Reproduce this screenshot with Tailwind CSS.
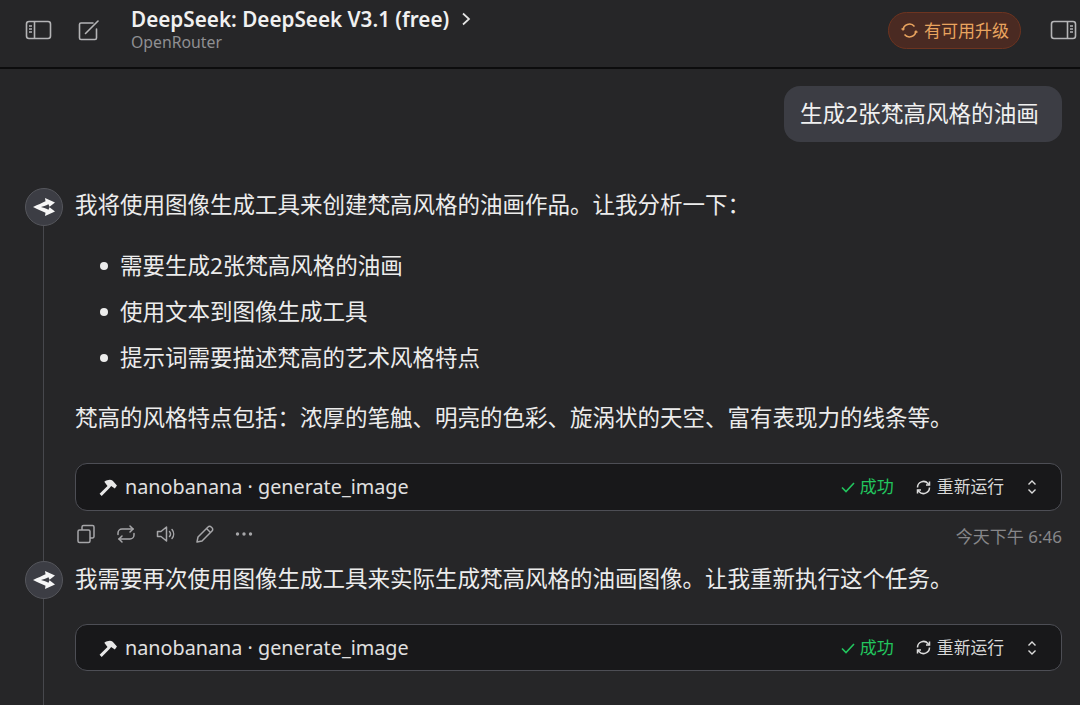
<!DOCTYPE html>
<html lang="zh-CN">
<head>
  <meta charset="UTF-8" />
  <meta name="viewport" content="width=device-width, initial-scale=1.0" />
  <title>DeepSeek V3.1</title>
  <script src="https://cdn.jsdelivr.net/npm/@tailwindcss/browser@4"></script>
</head>
<body class="bg-[#262628] text-[#ececec] font-['Noto_Sans','Noto_Sans_CJK_SC',sans-serif] overflow-hidden">
  <div class="w-[1080px] h-[705px] overflow-hidden flex flex-col">
    <!-- Header -->
    <header class="h-[69px] shrink-0 border-b-2 border-[#0c0c0d] flex items-center pl-[25px] pr-[3px] pb-[7px] text-[#b4b4b6]">
      <svg class="w-[27px] h-[22px]" viewBox="0 0 27 22" fill="none" stroke="currentColor" stroke-width="1.6">
        <rect x="1.5" y="2.5" width="24" height="17" rx="2.5" />
        <path d="M9.5 2.5v17" />
        <path d="M4 7h3M4 10h3M4 13h3" />
      </svg>
      <svg class="w-[24px] h-[24px] ml-[25px] -mt-[1px]" viewBox="0 0 24 24" fill="none" stroke="currentColor" stroke-width="1.6" stroke-linecap="round">
        <path d="M19.5 11v9a1.5 1.5 0 0 1-1.5 1.5H4A1.5 1.5 0 0 1 2.5 20V6.5A1.5 1.5 0 0 1 4 5h12" />
        <path d="M8.5 15.5L21 3" />
      </svg>
      <div class="ml-[30px] flex flex-col -mt-[3px]">
        <div class="flex items-center text-[#f0f0f0] font-semibold text-[20.7px] leading-[26px]">
          DeepSeek: DeepSeek V3.1 (free)
          <svg class="w-[12px] h-[14px] ml-[11px]" viewBox="0 0 12 14" fill="none" stroke="#e4e4e4" stroke-width="1.7"><path d="M3 1.5L9 7l-6 5.5" /></svg>
        </div>
        <div class="text-[15.8px] leading-[20px] text-[#8f8f92]">OpenRouter</div>
      </div>
      <div class="ml-auto flex items-center h-[37px] w-[133px] rounded-full bg-[#4a2a22] border border-[#6d3420] text-[#e9a45f] pl-[12px]">
        <svg class="w-[17px] h-[17px]" viewBox="0 0 17 17" fill="none" stroke="currentColor" stroke-width="1.5">
          <path d="M2 8.5a6.5 6.5 0 0 1 11.5-4" />
          <path d="M15 8.5a6.5 6.5 0 0 1-11.5 4" />
          <path d="M0.5 7h3M13.5 10h3" />
        </svg>
        <span class="ml-[6px] text-[17px] leading-none">有可用升级</span>
      </div>
      <svg class="w-[27px] h-[22px] ml-[29px]" viewBox="0 0 27 22" fill="none" stroke="currentColor" stroke-width="1.6">
        <rect x="1.5" y="2.5" width="24" height="17" rx="2.5" />
        <path d="M17.5 2.5v17" />
        <path d="M20 7h3M20 10h3M20 13h3" />
      </svg>
    </header>

    <main class="flex-1 flex flex-col min-h-0">
      <!-- User bubble -->
      <div class="flex justify-end pr-[18px] pt-[17px]">
        <div class="h-[56px] w-[278px] rounded-[16px] bg-[#3c3d44] flex items-center pl-[16px] text-[22.6px] whitespace-nowrap text-[#f0f0f0]">生成2张梵高风格的油画</div>
      </div>

      <!-- First reply -->
      <div class="flex mt-[46px] pl-[25px] pr-[18px]">
        <div class="w-[50px] shrink-0 flex flex-col items-start">
          <div class="w-[38px] h-[38px] rounded-full bg-[#3c3d44] border border-[#55565c] flex items-center justify-center shrink-0">
            <svg class="w-[24px] h-[20px]" viewBox="0 0 24 20" fill="#f6f6f6">
              <path d="M1 10C6 7.5 10 6 13.5 4.2L13 1L23 5.5L17.5 9.7L16.5 7.3C13.5 8.6 11 9.5 9 10C11 10.5 13.5 11.4 16.5 12.7L17.5 10.3L23 14.5L13 19L13.5 15.8C10 14 6 12.5 1 10Z" />
            </svg>
          </div>
          <div class="w-px flex-1 ml-[18px] bg-[#47484d]"></div>
        </div>
        <div class="flex-1 min-w-0">
          <p class="text-[22.5px] leading-[36px] -mt-[1px]">我将使用图像生成工具来创建梵高风格的油画作品。让我分析一下：</p>
          <ul class="mt-[25px] flex flex-col gap-[10px] text-[22.5px] leading-[36px]">
            <li class="flex items-center"><span class="w-[8px] h-[8px] rounded-full bg-[#ececec] ml-[25px] mr-[12px]"></span>需要生成2张梵高风格的油画</li>
            <li class="flex items-center"><span class="w-[8px] h-[8px] rounded-full bg-[#ececec] ml-[25px] mr-[12px]"></span>使用文本到图像生成工具</li>
            <li class="flex items-center"><span class="w-[8px] h-[8px] rounded-full bg-[#ececec] ml-[25px] mr-[12px]"></span>提示词需要描述梵高的艺术风格特点</li>
          </ul>
          <p class="mt-[24px] text-[22.5px] leading-[36px] whitespace-nowrap">梵高的风格特点包括：浓厚的笔触、明亮的色彩、旋涡状的天空、富有表现力的线条等。</p>

          <!-- Tool call -->
          <div class="mt-[27px] h-[48px] rounded-[12px] bg-[#18181a] border border-[#4d4e55] flex items-center pl-[22px] pr-[23px]">
            <svg class="w-[20px] h-[20px] text-[#e8e8e8]" viewBox="0 0 19 19" fill="currentColor">
              <path d="M1.5 16L9 8.5L6 4.5C9 2.5 12 2 14 3.5L18 8L16 11L12.5 8.5L11 10.5L3.5 18Z" />
            </svg>
            <span class="ml-[7px] text-[19.8px] text-[#e0e0e0]">nanobanana · generate_image</span>
            <svg class="ml-auto w-[16px] h-[14px] text-[#22c55e]" viewBox="0 0 16 14" fill="none" stroke="currentColor" stroke-width="1.6"><path d="M2 7.5l4 4L14 3" /></svg>
            <span class="ml-[4px] text-[17px] text-[#22c55e]">成功</span>
            <svg class="ml-[22px] w-[15px] h-[15px] text-[#dcdcdc]" viewBox="0 0 15 15" fill="none" stroke="currentColor" stroke-width="1.5">
              <path d="M1.5 7.5a6 6 0 0 1 10.5-4l1.5 1.5" />
              <path d="M13.5 7.5a6 6 0 0 1-10.5 4L1.5 10" />
              <path d="M13.5 1.5V5h-3.5M1.5 13.5V10H5" />
            </svg>
            <span class="ml-[6px] text-[16.8px] text-[#d8d8d8]">重新运行</span>
            <svg class="ml-[22px] w-[12px] h-[16px] text-[#dcdcdc]" viewBox="0 0 12 16" fill="none" stroke="currentColor" stroke-width="1.4"><path d="M2.5 5.5L6 2l3.5 3.5M2.5 10.5L6 14l3.5-3.5" /></svg>
          </div>

          <!-- Actions -->
          <div class="mt-[11px] h-[39px] flex items-start text-[#a6a6a9]">
            <div class="flex items-center gap-[20px] h-[24px] ml-[1px]">
              <svg class="w-[20px] h-[20px]" viewBox="0 0 20 20" fill="none" stroke="currentColor" stroke-width="1.5">
                <rect x="2" y="6" width="12" height="12.5" rx="1.5" />
                <path d="M6 6V3a1.5 1.5 0 0 1 1.5-1.5h9A1.5 1.5 0 0 1 18 3v9.5a1.5 1.5 0 0 1-1.5 1.5H14" />
              </svg>
              <svg class="w-[20px] h-[20px]" viewBox="0 0 20 20" fill="none" stroke="currentColor" stroke-width="1.5" stroke-linecap="round">
                <path d="M2 10.5V9a4 4 0 0 1 4-4h11" />
                <path d="M14 2l3 3-3 3" />
                <path d="M18 9.5V11a4 4 0 0 1-4 4H3" />
                <path d="M6 18l-3-3 3-3" />
              </svg>
              <svg class="w-[20px] h-[20px]" viewBox="0 0 20 20" fill="none" stroke="currentColor" stroke-width="1.5" stroke-linecap="round" stroke-linejoin="round">
                <path d="M1.5 7.5v5h3.5l5.5 4.5v-14L5 7.5z" />
                <path d="M13.5 7.5a3.5 3.5 0 0 1 0 5M16 5.5a7 7 0 0 1 0 9" />
              </svg>
              <svg class="w-[20px] h-[20px] -ml-[1px]" viewBox="0 0 20 20" fill="none" stroke="currentColor" stroke-width="1.5" stroke-linejoin="round">
                <path d="M2 18l1-5L13 3a2.2 2.2 0 0 1 3.2 0l.8.8a2.2 2.2 0 0 1 0 3.2L7 17z" />
                <path d="M11.5 4.5l4 4" />
              </svg>
              <svg class="w-[18px] h-[20px]" viewBox="0 0 18 20" fill="currentColor">
                <circle cx="2.5" cy="10" r="1.7" /><circle cx="9" cy="10" r="1.7" /><circle cx="15.5" cy="10" r="1.7" />
              </svg>
            </div>
            <span class="ml-auto text-[17px] leading-[24px] mt-[3px] text-[#87878a]">今天下午 6:46</span>
          </div>
        </div>
      </div>

      <!-- Second reply -->
      <div class="flex-1 flex pl-[25px] pr-[18px]">
        <div class="w-[50px] shrink-0 flex flex-col items-start">
          <div class="w-[38px] h-[38px] rounded-full bg-[#3c3d44] border border-[#55565c] flex items-center justify-center shrink-0">
            <svg class="w-[24px] h-[20px]" viewBox="0 0 24 20" fill="#f6f6f6">
              <path d="M1 10C6 7.5 10 6 13.5 4.2L13 1L23 5.5L17.5 9.7L16.5 7.3C13.5 8.6 11 9.5 9 10C11 10.5 13.5 11.4 16.5 12.7L17.5 10.3L23 14.5L13 19L13.5 15.8C10 14 6 12.5 1 10Z" />
            </svg>
          </div>
          <div class="w-px flex-1 ml-[18px] bg-[#47484d]"></div>
        </div>
        <div class="flex-1 min-w-0">
          <p class="text-[22.5px] leading-[36px]">我需要再次使用图像生成工具来实际生成梵高风格的油画图像。让我重新执行这个任务。</p>
          <div class="mt-[27px] h-[47px] rounded-[12px] bg-[#18181a] border border-[#4d4e55] flex items-center pl-[22px] pr-[23px]">
            <svg class="w-[20px] h-[20px] text-[#e8e8e8]" viewBox="0 0 19 19" fill="currentColor">
              <path d="M1.5 16L9 8.5L6 4.5C9 2.5 12 2 14 3.5L18 8L16 11L12.5 8.5L11 10.5L3.5 18Z" />
            </svg>
            <span class="ml-[7px] text-[19.8px] text-[#e0e0e0]">nanobanana · generate_image</span>
            <svg class="ml-auto w-[16px] h-[14px] text-[#22c55e]" viewBox="0 0 16 14" fill="none" stroke="currentColor" stroke-width="1.6"><path d="M2 7.5l4 4L14 3" /></svg>
            <span class="ml-[4px] text-[17px] text-[#22c55e]">成功</span>
            <svg class="ml-[22px] w-[15px] h-[15px] text-[#dcdcdc]" viewBox="0 0 15 15" fill="none" stroke="currentColor" stroke-width="1.5">
              <path d="M1.5 7.5a6 6 0 0 1 10.5-4l1.5 1.5" />
              <path d="M13.5 7.5a6 6 0 0 1-10.5 4L1.5 10" />
              <path d="M13.5 1.5V5h-3.5M1.5 13.5V10H5" />
            </svg>
            <span class="ml-[6px] text-[16.8px] text-[#d8d8d8]">重新运行</span>
            <svg class="ml-[22px] w-[12px] h-[16px] text-[#dcdcdc]" viewBox="0 0 12 16" fill="none" stroke="currentColor" stroke-width="1.4"><path d="M2.5 5.5L6 2l3.5 3.5M2.5 10.5L6 14l3.5-3.5" /></svg>
          </div>
        </div>
      </div>
    </main>
  </div>
</body>
</html>
